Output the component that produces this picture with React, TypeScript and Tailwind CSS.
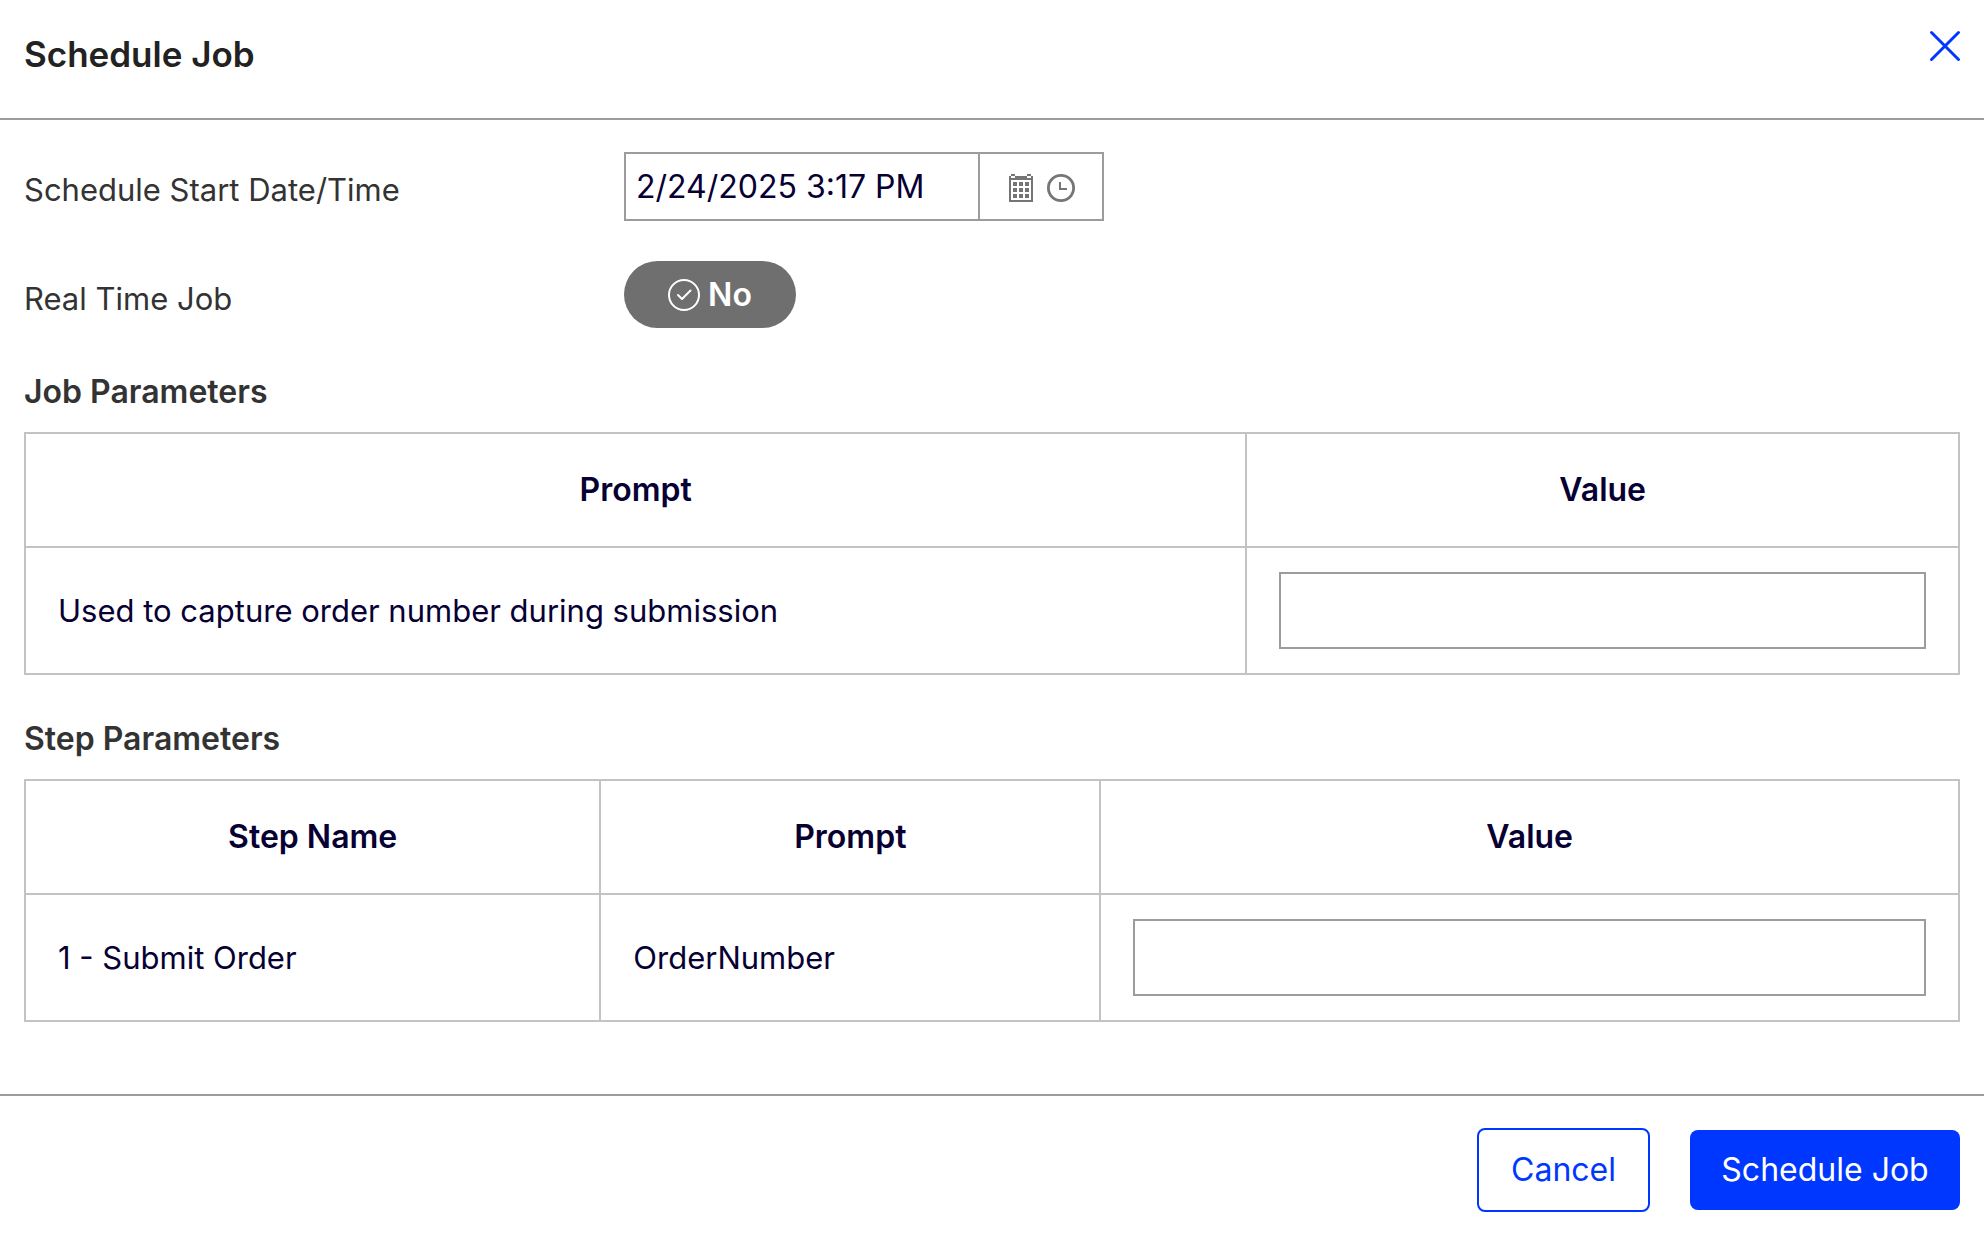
const calendarDots = [
  [4, 8], [10, 8], [16, 8],
  [4, 14], [10, 14], [16, 14],
  [4, 20], [10, 20], [16, 20],
];

function CloseIcon() {
  return (
    <svg className="size-8" viewBox="0 0 32 32" fill="none" stroke="currentColor" strokeWidth="3" strokeLinecap="round" aria-hidden="true">
      <path d="M2.5 2.5 29.5 29.5M29.5 2.5 2.5 29.5" />
    </svg>
  );
}

function CalendarIcon() {
  return (
    <svg className="h-7 w-6" viewBox="0 0 24 28" fill="currentColor" shapeRendering="crispEdges" aria-hidden="true">
      <path d="M2 0h4v2H2zM18 0h4v2h-4zM0 2h2v2h4V2h12v2h4V2h2v26H0zM2 6v20h20V6z" fillRule="evenodd" />
      {calendarDots.map(([x, y]) => (
        <rect key={`${x}-${y}`} x={x} y={y} width="4" height="4" />
      ))}
    </svg>
  );
}

function ClockIcon() {
  return (
    <svg className="size-7" viewBox="0 0 28 28" fill="none" stroke="currentColor" aria-hidden="true">
      <circle cx="14" cy="14" r="12.6" strokeWidth="2.8" />
      <path d="M13 8v7h7" strokeWidth="2" />
    </svg>
  );
}

function CheckCircleIcon() {
  return (
    <svg className="size-8" viewBox="0 0 32 32" fill="none" stroke="currentColor" strokeWidth="2" strokeLinecap="round" strokeLinejoin="round" aria-hidden="true">
      <circle cx="16" cy="16" r="15" />
      <path d="M10 16l4 4 8.500-8.500" />
    </svg>
  );
}

const heading = "mt-11 mb-5 text-[32px] leading-10 font-semibold";
const table = "w-full table-fixed border-collapse text-[#070033]";
const th = "h-[114px] border-2 border-[#c3c3c3] px-8 text-center text-[32px] leading-10 font-semibold";
const td = "h-[127px] border-2 border-[#c3c3c3] px-8";
const field = "block h-[77px] w-full border-2 border-[#9c9c9c] bg-white px-4";

export default function App() {
  return (
    <div role="dialog" aria-labelledby="dialog-title" className="bg-white font-['Inter',sans-serif] text-[31px] leading-10 text-[#333333]">
      <header className="flex h-[120px] items-start justify-between border-b-2 border-[#9c9c9c] px-6 pt-[30px]">
        <h1 id="dialog-title" className="text-[35px] leading-12 font-semibold text-[#222222]">Schedule Job</h1>
        <button type="button" aria-label="Close" className="-mr-px text-[#0037ff]">
          <CloseIcon />
        </button>
      </header>

      <main className="px-6 pt-8 pb-18">
        <div className="flex h-[69px] items-center">
          <label htmlFor="start" className="w-[600px] shrink-0 pt-1.5">Schedule Start Date/Time</label>
          <div className="flex h-full w-[480px] border-2 border-[#9c9c9c]">
            <input id="start" type="text" defaultValue="2/24/2025 3:17 PM" className="min-w-0 flex-1 pl-2.5 text-[32px] text-[#070033]" />
            <div className="flex w-[124px] items-center justify-center gap-3.5 border-l-2 border-[#9c9c9c] pt-0.5 pl-0.5 text-[#757575]">
              <button type="button" aria-label="Choose date"><CalendarIcon /></button>
              <button type="button" aria-label="Choose time"><ClockIcon /></button>
            </div>
          </div>
        </div>

        <div className="mt-10 flex h-[67px] items-center">
          <span id="realtime" className="w-[600px] shrink-0 pt-2">Real Time Job</span>
          <button type="button" aria-labelledby="realtime" aria-pressed="false" className="flex h-full w-[172px] items-center justify-center gap-2 rounded-full bg-[#6f6f6f] text-[32px] font-semibold text-white">
            <CheckCircleIcon />
            No
          </button>
        </div>

        <h2 className={heading}>Job Parameters</h2>
        <table className={table}>
          <colgroup>
            <col className="w-[63.15%]" />
            <col />
          </colgroup>
          <thead>
            <tr>
              <th scope="col" className={th}>Prompt</th>
              <th scope="col" className={th}>Value</th>
            </tr>
          </thead>
          <tbody>
            <tr>
              <td className={td}>Used to capture order number during submission</td>
              <td className={td}><input type="text" aria-label="Order number value" className={field} /></td>
            </tr>
          </tbody>
        </table>

        <h2 className={heading}>Step Parameters</h2>
        <table className={table}>
          <colgroup>
            <col className="w-[29.75%]" />
            <col className="w-[25.85%]" />
            <col />
          </colgroup>
          <thead>
            <tr>
              <th scope="col" className={th}>Step Name</th>
              <th scope="col" className={th}>Prompt</th>
              <th scope="col" className={th}>Value</th>
            </tr>
          </thead>
          <tbody>
            <tr>
              <td className={td}>1 - Submit Order</td>
              <td className={td}>OrderNumber</td>
              <td className={td}><input type="text" aria-label="OrderNumber value" className={field} /></td>
            </tr>
          </tbody>
        </table>
      </main>

      <footer className="flex items-center justify-end gap-10 border-t-2 border-[#9c9c9c] px-6 pt-8 pb-6 text-[32px]">
        <button type="button" className="h-[84px] w-[173px] rounded-lg border-2 border-[#0037ff] text-[#0037ff]">Cancel</button>
        <button type="button" className="h-20 w-[270px] rounded-lg bg-[#0037ff] text-white">Schedule Job</button>
      </footer>
    </div>
  );
}
